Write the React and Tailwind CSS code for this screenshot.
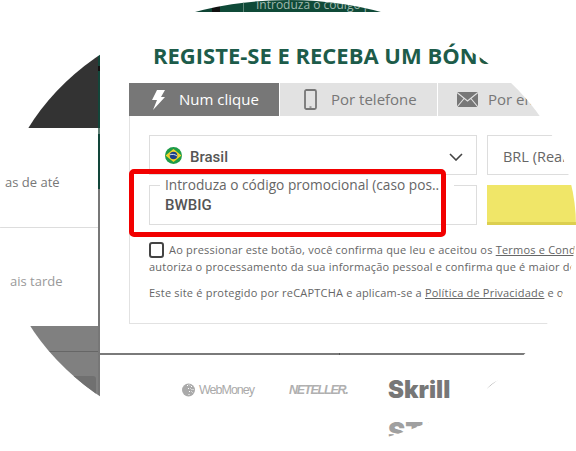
function BoltIcon() {
  return (
    <svg width="13" height="20" viewBox="0 0 13 20" className="shrink-0">
      <path d="M5 0h8L9 7h4L1 20l4-10H0z" fill="#fff" />
    </svg>
  )
}

function PhoneIcon() {
  return (
    <svg width="13" height="21" viewBox="0 0 13 21" className="shrink-0">
      <rect x="1" y="1" width="11" height="19" rx="1.5" fill="none" stroke="#777" strokeWidth="1.8" />
      <rect x="5.5" y="17.4" width="2" height="1.3" fill="#777" />
    </svg>
  )
}

function MailIcon() {
  return (
    <svg width="21" height="15" viewBox="0 0 21 15" className="shrink-0">
      <path d="M0 0h21v15H0z" fill="#777" />
      <path d="M0 .5l10.5 8.5L21 .5M0 15l7.5-9M21 15l-7.5-9" fill="none" stroke="#e2e2e2" strokeWidth="1.1" />
    </svg>
  )
}

function BrazilFlag() {
  return (
    <svg width="17" height="17" viewBox="0 0 18 18" className="shrink-0">
      <circle cx="9" cy="9" r="9" fill="#1e9b48" />
      <path d="M9 2.2L17.4 9 9 15.8.6 9z" fill="#f2d42b" />
      <circle cx="9" cy="9" r="4" fill="#1c3f88" />
      <path d="M5.4 8.2c2.5-.8 5-.4 7.2 1.2" fill="none" stroke="#e8eef5" strokeWidth="1" />
    </svg>
  )
}

function WebMoneyIcon() {
  return (
    <svg width="13" height="14" viewBox="0 0 13 14" className="shrink-0">
      <circle cx="6.5" cy="7" r="6.5" fill="#aaa" />
      <path d="M5 2l1 1M7 1.5l1 1M9 3l1 1M6 5l1 1M8.5 5.5l1 1M10.5 6l1 1M7 8l1 1M9.5 8.5l1 1M6.5 11l1 1" stroke="#fff" strokeWidth="1" />
    </svg>
  )
}

export default function App() {
  return (
    <div className="w-[576px] h-[451px] bg-white overflow-hidden font-['Open_Sans',sans-serif]">
      <div className="w-[576px] h-[451px] rounded-[50%] overflow-hidden flex flex-col">
        <div className="h-[12px] shrink-0 flex">
          <div className="w-[212px] shrink-0 bg-[#0e4334]" />
          <div className="w-[8px] shrink-0 bg-[#111]" />
          <div className="flex-1 bg-[#0f4a38] pl-[23px] overflow-hidden">
            <div className="h-full border-l border-[#5c8476] pl-3 text-xs leading-[9px] text-[#9fb8ae] whitespace-nowrap">
              Introduza o código promocional
            </div>
          </div>
        </div>

        <div className="flex flex-1 min-h-0">
          {/* left page behind the dialog */}
          <div className="w-[98px] shrink-0 flex flex-col">
            <div className="h-[116px] shrink-0 bg-[#333]" />
            <div className="h-[198px] shrink-0 bg-white text-[13px] text-[#777] whitespace-nowrap">
              <div className="h-[100px] border-b border-[#ddd] pl-[5px] pt-[45px]">as de até</div>
              <div className="pl-[10px] pt-[44px] text-[#999]">ais tarde</div>
            </div>
            <div className="h-[25px] shrink-0 bg-[#808080]" />
            <div className="h-px shrink-0 bg-[#666]" />
            <div className="h-[24px] shrink-0 bg-[#808080]" />
            <div className="flex-1 bg-[#808080]">
              <div className="h-full mr-[2px] bg-[#707070] rounded-tr-[3px]" />
            </div>
          </div>
          <div className="w-[2px] shrink-0 flex flex-col">
            <div className="h-[54px] shrink-0 bg-[#12463a]" />
            <div className="h-[5px] shrink-0 bg-[#111]" />
            <div className="h-[57px] shrink-0 bg-[#12463a]" />
            <div className="h-[6px] shrink-0 bg-[#5f7f75]" />
            <div className="h-[55px] shrink-0 bg-[#12463a]" />
            <div className="flex-1 bg-[#777]" />
          </div>

          {/* dialog */}
          <div className="flex-1 min-w-0 bg-white pt-[28px] whitespace-nowrap overflow-hidden">
            <h1 className="pl-[53px] text-[22px] leading-[30px] font-bold text-[#1d5c4a]">REGISTE-SE E RECEBA UM BÓNUS</h1>

            <div className="ml-[29px] mt-[13px] flex h-[33px] w-[440px] text-[15px]">
              <div className="w-[150px] shrink-0 bg-[#777] text-white flex items-center gap-[14px] pl-[23px]">
                <BoltIcon />
                Num clique
              </div>
              <div className="w-[157px] shrink-0 ml-[1px] bg-[#e2e2e2] text-[#777] flex items-center gap-[14px] pl-[24px]">
                <PhoneIcon />
                Por telefone
              </div>
              <div className="w-[130px] shrink-0 ml-[1px] bg-[#e2e2e2] text-[#777] flex items-center gap-[10px] pl-[19px]">
                <MailIcon />
                Por email
              </div>
            </div>

            <div className="ml-[29px] w-[520px] h-[208px] border border-t-0 border-[#e2e2e2] pl-[19px] pt-[19px]">
              <div className="flex gap-[10px]">
                <div className="w-[328px] h-[40px] shrink-0 border border-[#ddd] flex items-center pl-[15px] pr-[13px] gap-[8px]">
                  <BrazilFlag />
                  <span className="flex-1 pt-[4px] font-['Roboto',sans-serif] font-medium text-[15px] text-[#555]">Brasil</span>
                  <svg width="14" height="8" viewBox="0 0 14 8" className="mt-[4px]"><path d="M1 1l6 6 6-6" fill="none" stroke="#444" strokeWidth="1.6" /></svg>
                </div>
                <div className="w-[120px] h-[40px] shrink-0 border border-[#ddd] pl-[15px] pt-[3px] flex items-center text-[14.5px] text-[#666]">BRL (Real)</div>
              </div>

              <div className="flex items-end gap-[10px] mt-[1px]">
                <div className="relative w-[328px] shrink-0">
                  <fieldset className="h-[49px] border border-[#ddd] pl-[10px]">
                    <legend className="w-[294px] px-[5px] text-[13.7px] leading-[18px] text-[#666]">Introduza o código promocional (caso pos..</legend>
                    <div className="pl-[5px] mt-[2px] font-['Roboto',sans-serif] font-medium text-[15px] leading-[18px] text-[#555]">BWBIG</div>
                  </fieldset>
                  <div className="absolute left-[-20px] top-[-7px] w-[317px] h-[68px] border-[5px] border-[#f20000] rounded-[5px]" />
                </div>
                <div className="w-[120px] h-[40px] shrink-0 bg-[#f0e668] border-b-[3px] border-[#dccf4f]" />
              </div>

              <div className="mt-[16px] text-[11px] leading-[17px] text-[#666] tracking-[0.2px]">
                <div className="flex items-center gap-[5px]">
                  <span className="w-[15px] h-[16px] border-2 border-[#444] rounded-[3px] shrink-0" />
                  <span>Ao pressionar este botão, você confirma que leu e aceitou os <u>Termos e Condições</u></span>
                </div>
                <div>autoriza o processamento da sua informação pessoal e confirma que é maior de idade</div>
                <div className="mt-[9px]">Este site é protegido por reCAPTCHA e aplicam-se a <u>Política de Privacidade</u> e os</div>
              </div>
            </div>

            <div className="mt-[29px] h-[2px] bg-[#7a7a7a]">
              <div className="ml-[239px] w-px h-[2px] bg-[#555]" />
            </div>

            <div className="flex items-start mt-[21px] ml-[82px]">
              <div className="w-[71px] shrink-0 mt-[7px] flex items-center gap-[4px] text-[12.5px] leading-[14px] text-[#aaa] tracking-[-1px] font-['Liberation_Sans',sans-serif]">
                <WebMoneyIcon />
                WebMoney
              </div>
              <div className="w-[59px] shrink-0 ml-[36px] mt-[7px] text-[12.5px] leading-[14px] italic font-bold tracking-[-1.2px] text-[#b0b0b0] font-['Liberation_Sans',sans-serif]">NETELLER.</div>
              <div className="w-[62px] shrink-0 ml-[40px] mt-[1px] text-[24px] leading-[26px] font-black text-[#777] font-['Inter',sans-serif]">
                Skrill
                <div className="mt-[16px] text-[26px] text-[#a0a0a0]">STS</div>
              </div>
              <svg width="14" height="9" viewBox="0 0 14 9" className="ml-[37px] mt-[4px] shrink-0">
                <path d="M0 9C3 5 8 2 13 0" fill="none" stroke="#bbb" strokeWidth="1" />
              </svg>
            </div>
          </div>
        </div>
      </div>
    </div>
  )
}
